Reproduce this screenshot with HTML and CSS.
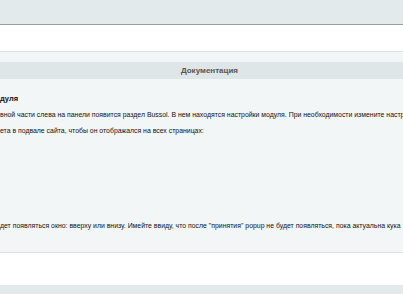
FILE: index.html
```html
<!DOCTYPE html>
<html lang="ru">
<head>
    <meta charset="UTF-8">
    <meta name="viewport" content="width=device-width, initial-scale=1.0">
    <title>Документация</title>
    <link rel="stylesheet" href="styles.css">
</head>
<body>
    <div class="top-bar"></div>
    <div class="white-strip"></div>

    <section class="tab-panel">
        <div class="tab-gap"></div>
        <header class="tab-title">Документация</header>
        <div class="tab-body">
            <h4 class="doc-head">дуля</h4>
            <p>вной части слева на панели появится раздел Bussol. В нем находятся настройки модуля. При необходимости измените настройки</p>
            <p>ета в подвале сайта, чтобы он отображался на всех страницах:</p>
            <div class="code-space"></div>
            <p>дет появляться окно: вверху или внизу. Имейте ввиду, что после "принятия" popup не будет появляться, пока актуальна кука</p>
        </div>
    </section>

    <div class="white-strip bottom"></div>
    <div class="bottom-bar"></div>
</body>
</html>
```

FILE: styles.css
```css
body {
    margin: 0;
    font-family: "Liberation Sans", Arial, sans-serif;
    font-size: 8px;
    color: #111;
    background: #fff;
    overflow: hidden;
}

.top-bar {
    height: 24px;
    background: #e3eaeb;
    border-bottom: 1px solid #9c9fa0;
}

.white-strip {
    height: 26px;
    background: #fff;
}

.white-strip.bottom {
    height: 32px;
}

.tab-panel {
    border-top: 1px solid #dde3e4;
    border-bottom: 1px solid #dde3e4;
    background: #f3f6f7;
}

.tab-gap {
    height: 10px;
}

.tab-title {
    height: 17px;
    line-height: 17px;
    background: #dfe6e8;
    text-align: center;
    padding-left: 16px;
    font-weight: bold;
    color: #555;
}

.tab-body {
    padding: 12px 0 18px 0;
    white-space: nowrap;
    overflow: hidden;
    font-size: 6.9px;
}

.tab-body p,
.tab-body .doc-head {
    margin: 0;
    height: 16px;
    line-height: 16px;
}

.tab-body .doc-head {
    font-weight: bold;
    font-size: 7.5px;
}

.code-space {
    height: 79px;
}

.bottom-bar {
    height: 12px;
    background: #e3eaeb;
}
```
